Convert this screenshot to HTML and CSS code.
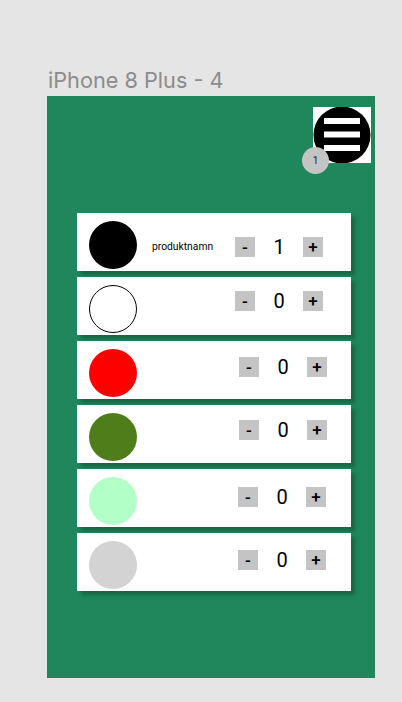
FILE: index.html
```html
<!DOCTYPE html>
<html lang="sv">
<head>
<meta charset="utf-8">
<title>iPhone 8 Plus - 4</title>
<link rel="stylesheet" href="styles.css">
</head>
<body>
<div class="page">
  <div class="frame-title">iPhone 8 Plus - 4</div>
  <main class="frame">
    <header class="topbar">
      <div class="menu">
        <svg class="menu-icon" width="58" height="56" viewBox="0 0 58 56">
          <circle cx="29" cy="28" r="28.5" fill="#000"/>
          <rect x="11" y="11" width="36" height="6" fill="#fff"/>
          <rect x="11" y="24.5" width="36" height="6" fill="#fff"/>
          <rect x="11" y="38" width="36" height="6" fill="#fff"/>
        </svg>
        <span class="badge">1</span>
      </div>
    </header>
    <section class="list">
      <div class="row r1">
        <span class="dot black"></span>
        <span class="name">produktnamn</span>
        <div class="counter"><span class="btn">-</span><span class="qty">1</span><span class="btn">+</span></div>
      </div>
      <div class="row r2">
        <span class="dot white"></span>
        <span class="name"></span>
        <div class="counter"><span class="btn">-</span><span class="qty">0</span><span class="btn">+</span></div>
      </div>
      <div class="row r3">
        <span class="dot red"></span>
        <span class="name"></span>
        <div class="counter"><span class="btn">-</span><span class="qty">0</span><span class="btn">+</span></div>
      </div>
      <div class="row r4">
        <span class="dot olive"></span>
        <span class="name"></span>
        <div class="counter"><span class="btn">-</span><span class="qty">0</span><span class="btn">+</span></div>
      </div>
      <div class="row r5">
        <span class="dot mint"></span>
        <span class="name"></span>
        <div class="counter"><span class="btn">-</span><span class="qty">0</span><span class="btn">+</span></div>
      </div>
      <div class="row r6">
        <span class="dot grey"></span>
        <span class="name"></span>
        <div class="counter"><span class="btn">-</span><span class="qty">0</span><span class="btn">+</span></div>
      </div>
    </section>
  </main>
</div>
</body>
</html>
```
FILE: styles.css
```css
* { box-sizing: border-box; }
html, body { margin: 0; padding: 0; }
body {
  background: #e5e5e5;
  font-family: Roboto, "Liberation Sans", Arial, sans-serif;
  width: 402px;
  height: 702px;
  overflow: hidden;
}
.page {
  padding: 68px 0 0 47px;
}
.frame-title {
  font-family: Inter, Roboto, "Liberation Sans", sans-serif;
  font-size: 21.7px;
  line-height: 24px;
  color: #8c8c8c;
  padding-left: 1px;
  margin-bottom: 4px;
}
.frame {
  width: 328px;
  height: 582px;
  background: #1f875b;
  padding-top: 11px;
  display: flex;
  flex-direction: column;
}
.topbar {
  display: flex;
  justify-content: flex-end;
  padding-right: 4px;
  height: 56px;
}
.menu {
  position: relative;
  width: 58px;
  height: 56px;
  background: #fff;
}
.menu-icon { display: block; }
.badge {
  position: absolute;
  left: -11px;
  top: 40px;
  width: 27px;
  height: 27px;
  border-radius: 50%;
  background: #c4c4c4;
  color: #222;
  font-size: 10px;
  line-height: 27px;
  text-align: center;
}
.list {
  margin-top: 50px;
  margin-left: 30px;
  width: 274px;
  display: flex;
  flex-direction: column;
  gap: 6px;
}
.row {
  height: 58px;
  background: #fff;
  box-shadow: 4px 4px 4px rgba(0, 0, 0, 0.25);
  display: grid;
  grid-template-columns: 48px 98px auto;
  align-items: start;
  padding: 8px 0 0 12px;
}
.dot {
  width: 48px;
  height: 48px;
  border-radius: 50%;
  display: block;
}
.dot.black { background: #000; }
.dot.white { background: #fff; border: 1px solid #000; }
.dot.red { background: #ff0000; }
.dot.olive { background: #4e7d19; }
.dot.mint { background: #b3ffc8; }
.dot.grey { background: #d3d3d3; }
.name {
  font-size: 10.3px;
  line-height: 12px;
  color: #000;
  padding-left: 15px;
  margin-top: 20px;
}
.counter {
  display: flex;
  align-items: center;
}
.btn {
  width: 20px;
  height: 20px;
  background: #c4c4c4;
  font-size: 17px;
  font-weight: 500;
  line-height: 20px;
  text-align: center;
  color: #000;
}
.qty {
  width: 48px;
  text-align: center;
  font-size: 20px;
  line-height: 20px;
  color: #000;
}
.r1 .counter { margin-top: 16px; }
.r2 .counter { margin-top: 6px; }
.r3 .counter { margin-top: 8px; margin-left: 4px; }
.r4 .counter { margin-top: 7px; margin-left: 4px; }
.r5 .counter { margin-top: 10px; margin-left: 3px; }
.r6 .counter { margin-top: 9px; margin-left: 3px; }
```
